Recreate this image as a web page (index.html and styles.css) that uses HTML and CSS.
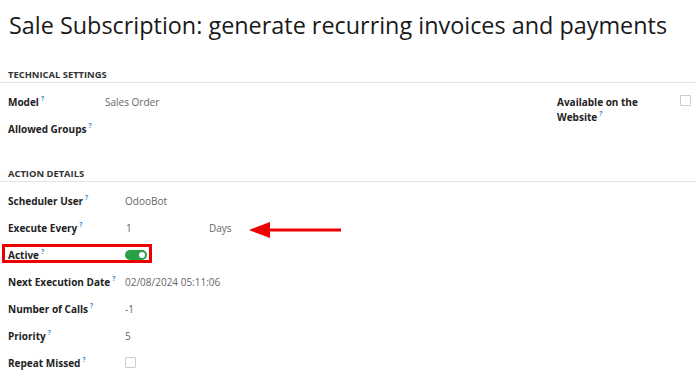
FILE: index.html
```html
<!DOCTYPE html>
<html>
<head>
<meta charset="utf-8">
<link rel="stylesheet" href="styles.css">
</head>
<body>
<div class="page">
  <h1 class="title">Sale Subscription: generate recurring invoices and payments</h1>

  <section class="group group-tech">
    <div class="group-head">TECHNICAL SETTINGS</div>
    <div class="tech">
      <div class="fields fields-tech">
        <div class="label">Model<sup class="help">?</sup></div>
        <div class="value">Sales Order</div>
        <div class="label">Allowed Groups<sup class="help">?</sup></div>
        <div class="value"></div>
      </div>
      <div class="tech-right">
        <div class="label label-wrap">Available on the<br>Website<sup class="help">?</sup></div>
        <span class="checkbox"></span>
      </div>
    </div>
  </section>

  <section class="group group-action">
    <div class="group-head">ACTION DETAILS</div>
    <div class="fields fields-action">
      <div class="label">Scheduler User<sup class="help">?</sup></div>
      <div class="value">OdooBot</div>

      <div class="label">Execute Every<sup class="help">?</sup></div>
      <div class="value interval">
        <span class="num">1</span><span class="unit">Days</span>
        <svg class="arrow" width="96" height="20" viewBox="0 0 96 20">
          <line x1="18" y1="10" x2="93" y2="10" stroke="#ee0000" stroke-width="3"/>
          <polygon points="1,10 22,2 22,18" fill="#ee0000"/>
        </svg>
      </div>

      <div class="label label-active">Active<sup class="help">?</sup><span class="highlight"></span></div>
      <div class="value"><span class="toggle"><span class="knob"></span></span></div>

      <div class="label">Next Execution Date<sup class="help">?</sup></div>
      <div class="value">02/08/2024 05:11:06</div>

      <div class="label">Number of Calls<sup class="help">?</sup></div>
      <div class="value">-1</div>

      <div class="label">Priority<sup class="help">?</sup></div>
      <div class="value">5</div>

      <div class="label">Repeat Missed<sup class="help">?</sup></div>
      <div class="value"><span class="checkbox"></span></div>
    </div>
  </section>
</div>
</body>
</html>
```

FILE: styles.css
```css
html, body {
  margin: 0;
  padding: 0;
  background: #ffffff;
}

body {
  font-family: "Open Sans", "Noto Sans", sans-serif;
  color: #222222;
}

.page {
  width: 696px;
  overflow: hidden;
}

.title {
  margin: 0;
  padding: 8px 0 0 9px;
  font-size: 23.4px;
  line-height: 34px;
  font-weight: 400;
  color: #1a1a1a;
  white-space: nowrap;
}

.group-head {
  padding-left: 8px;
  font-size: 9.4px;
  font-weight: 700;
  line-height: 15px;
  color: #333333;
  border-bottom: 1px solid #e4e4e4;
}

.group-tech {
  margin-top: 25px;
}

.group-action {
  margin-top: 24px;
}

.tech {
  display: flex;
  padding: 5px 0 0 8px;
}

.fields {
  display: grid;
  grid-auto-rows: 27px;
  align-items: center;
}

.fields-tech {
  grid-template-columns: 97px 200px;
  flex: 0 0 auto;
}

.fields-action {
  padding: 5px 0 0 8px;
  grid-template-columns: 117px 300px;
}

.label {
  font-size: 10px;
  line-height: 14px;
  font-weight: 700;
  color: #222222;
  white-space: nowrap;
  position: relative;
}

.help {
  font-size: 6.5px;
  font-weight: 700;
  color: #3d8ccc;
  margin-left: 2px;
  position: relative;
  top: 0;
  vertical-align: top;
  line-height: 8px;
}

.value {
  font-size: 10px;
  color: #666666;
  display: flex;
  align-items: center;
}

.tech-right {
  margin-left: auto;
  display: flex;
  align-items: flex-start;
  padding-top: 7px;
  padding-right: 5px;
}

.label-wrap {
  width: 90px;
  line-height: 15px;
}

.tech-right .label {
  margin-right: 33px;
}

.checkbox {
  display: inline-block;
  width: 9px;
  height: 9px;
  border: 1px solid #cccccc;
  border-radius: 1px;
  background: #ffffff;
  margin-top: 0;
}

.value .checkbox {
  margin-top: 0;
}

.interval {
  position: relative;
}

.num {
  width: 83px;
  padding-left: 1px;
}

.arrow {
  position: absolute;
  left: 123px;
  top: 50%;
  margin-top: -8px;
}

.toggle {
  display: inline-block;
  position: relative;
  width: 22px;
  height: 10px;
  border-radius: 5px;
  background: #27a046;
}

.knob {
  position: absolute;
  right: 2px;
  top: 2px;
  width: 6px;
  height: 6px;
  border-radius: 50%;
  background: #ffffff;
}

.highlight {
  position: absolute;
  left: -6px;
  top: -4px;
  width: 144px;
  height: 13px;
  border: 3px solid #ee0000;
  pointer-events: none;
}
```
